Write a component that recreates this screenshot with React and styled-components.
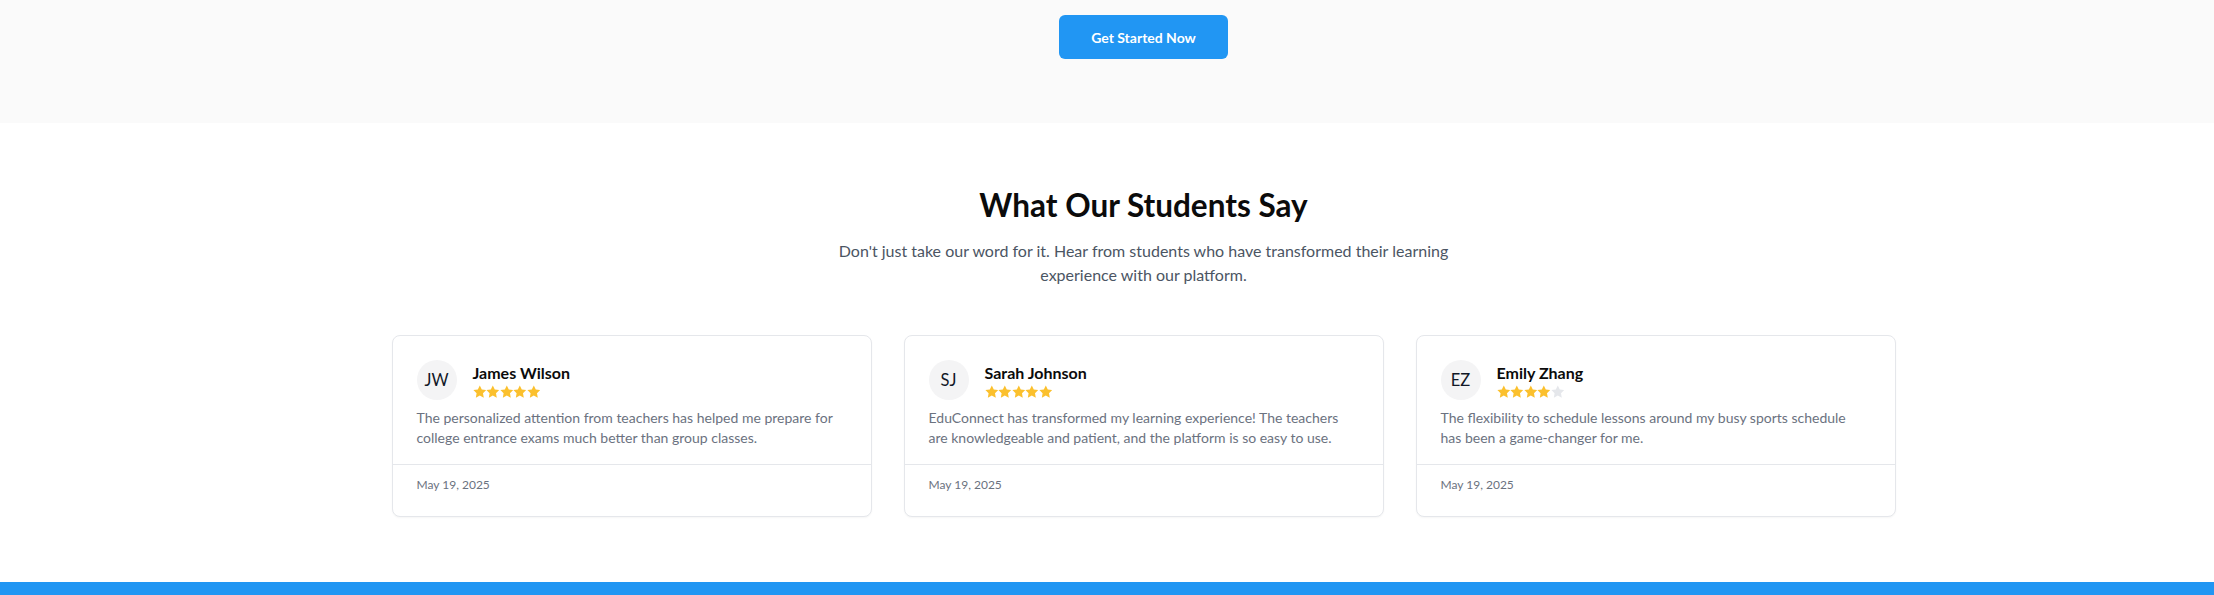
import React from "react";
import styled, { createGlobalStyle } from "styled-components";

const GlobalStyle = createGlobalStyle`
  html, body { margin: 0; padding: 0; background: #ffffff; }
  body {
    font-family: Lato, "Open Sans", "Liberation Sans", sans-serif;
    color: #111827;
    -webkit-font-smoothing: antialiased;
  }
  * { box-sizing: border-box; }
`;

const CtaSection = styled.section`
  background: #fafafa;
  padding: 15px 0 64px 73px;
  display: flex;
  justify-content: center;
`;

const PrimaryButton = styled.button`
  width: 169px;
  height: 44px;
  border: none;
  border-radius: 6px;
  background: #2196f3;
  color: #ffffff;
  font-family: inherit;
  font-size: 14px;
  font-weight: 700;
  cursor: pointer;
`;

const TestimonialSection = styled.section`
  background: #ffffff;
  padding: 64px 0 65px 73px;
  display: flex;
  flex-direction: column;
  align-items: center;
`;

const Heading = styled.h2`
  margin: 0 0 16px;
  font-size: 31.5px;
  line-height: 36px;
  font-weight: 700;
  color: #0b0b0b;
  text-align: center;
`;

const Subtitle = styled.p`
  margin: 0 0 48px;
  max-width: 640px;
  font-size: 16px;
  line-height: 24px;
  color: #4b5563;
  text-align: center;
`;

const CardGrid = styled.div`
  width: 1504px;
  display: grid;
  grid-template-columns: repeat(3, 1fr);
  gap: 32px;
`;

const Card = styled.article`
  background: #ffffff;
  border: 1px solid #e5e7eb;
  border-radius: 8px;
  box-shadow: 0 1px 2px rgba(0, 0, 0, 0.04);
  display: flex;
  flex-direction: column;
`;

const CardBody = styled.div`
  padding: 24px 24px 16px;
`;

const CardHeader = styled.div`
  display: flex;
  align-items: center;
  gap: 16px;
  margin-bottom: 8px;
`;

const Avatar = styled.div`
  width: 40px;
  height: 40px;
  border-radius: 50%;
  background: #f4f4f5;
  display: flex;
  align-items: center;
  justify-content: center;
  font-size: 16.5px;
  color: #111827;
  flex-shrink: 0;
`;

const NameBlock = styled.div`
  display: flex;
  flex-direction: column;
`;

const Name = styled.div`
  font-size: 16px;
  line-height: 24px;
  font-weight: 700;
  color: #0b0b0b;
`;

const Stars = styled.div`
  display: flex;
  height: 14px;
  align-items: center;
`;

const Quote = styled.p`
  margin: 0;
  max-width: 428px;
  font-size: 14px;
  line-height: 20px;
  color: #6b7280;
`;

const CardFooter = styled.div`
  border-top: 1px solid #e5e7eb;
  padding: 12px 24px 23px;
  font-size: 12px;
  line-height: 16px;
  color: #6b7280;
`;

const BottomBand = styled.div`
  height: 13px;
  background: #2196f3;
`;

function Star({ filled }) {
  return (
    <svg width="13.6" height="13.6" viewBox="0 0 24 24" aria-hidden="true">
      <path
        d="M12 0.8l3.5 7.1 7.8 1.1-5.65 5.5 1.35 7.8L12 18.6l-7 3.7 1.35-7.8L0.7 9l7.8-1.1z"
        fill={filled ? "#fbc02d" : "#e5e7eb"}
      />
    </svg>
  );
}

const testimonials = [
  {
    initials: "JW",
    name: "James Wilson",
    rating: 5,
    text: "The personalized attention from teachers has helped me prepare for college entrance exams much better than group classes.",
    date: "May 19, 2025",
  },
  {
    initials: "SJ",
    name: "Sarah Johnson",
    rating: 5,
    text: "EduConnect has transformed my learning experience! The teachers are knowledgeable and patient, and the platform is so easy to use.",
    date: "May 19, 2025",
  },
  {
    initials: "EZ",
    name: "Emily Zhang",
    rating: 4,
    text: "The flexibility to schedule lessons around my busy sports schedule has been a game-changer for me.",
    date: "May 19, 2025",
  },
];

export default function App() {
  return (
    <>
      <GlobalStyle />
      <CtaSection>
        <PrimaryButton>Get Started Now</PrimaryButton>
      </CtaSection>
      <TestimonialSection>
        <Heading>What Our Students Say</Heading>
        <Subtitle>
          Don't just take our word for it. Hear from students who have
          transformed their learning experience with our platform.
        </Subtitle>
        <CardGrid>
          {testimonials.map((t) => (
            <Card key={t.name}>
              <CardBody>
                <CardHeader>
                  <Avatar>{t.initials}</Avatar>
                  <NameBlock>
                    <Name>{t.name}</Name>
                    <Stars>
                      {[0, 1, 2, 3, 4].map((i) => (
                        <Star key={i} filled={i < t.rating} />
                      ))}
                    </Stars>
                  </NameBlock>
                </CardHeader>
                <Quote>{t.text}</Quote>
              </CardBody>
              <CardFooter>{t.date}</CardFooter>
            </Card>
          ))}
        </CardGrid>
      </TestimonialSection>
      <BottomBand />
    </>
  );
}
